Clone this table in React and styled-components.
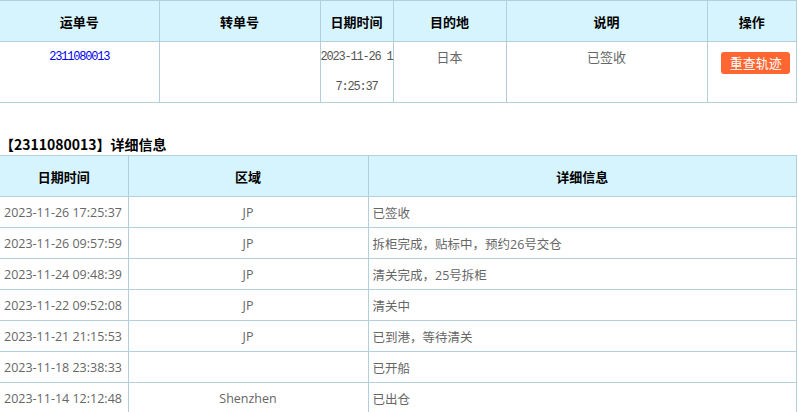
import React from 'react';
import styled, { createGlobalStyle } from 'styled-components';

const GlobalStyle = createGlobalStyle`
  body {
    margin: 0;
    background: #fff;
    font-family: "Open Sans", "Noto Sans CJK SC", sans-serif;
  }
`;

const Page = styled.div`
  width: 797px;
`;

const Table = styled.table`
  width: 797px;
  border-collapse: collapse;
  table-layout: fixed;

  th:first-child,
  td:first-child {
    border-left: none;
  }
`;

const HeadCell = styled.th`
  height: 40px;
  padding: 0;
  background: #d6f4fd;
  border: 1px solid #b3cfdc;
  color: #000;
  font-size: 13px;
  font-weight: bold;
  text-align: center;
  font-family: "Noto Sans CJK SC", sans-serif;
`;

const SummaryCell = styled.td`
  height: 60px;
  padding: 0 0 0 ${p => (p.$indent ? '8px' : '0')};
  border: 1px solid #b3cfdc;
  vertical-align: top;
  text-align: center;
  line-height: 30px;
  font-size: 13px;
  color: #666;
  font-family: "Noto Sans CJK SC", sans-serif;
`;

const MonoText = styled.div`
  font-family: "Liberation Mono", monospace;
  font-size: 12px;
  line-height: 30px;
  letter-spacing: -1.2px;
  word-break: break-all;
  color: ${p => (p.$link ? '#0000f0' : '#555')};
`;

const RetryButton = styled.button`
  display: block;
  margin: 10px auto 0;
  width: 69px;
  height: 22px;
  padding: 0;
  border: none;
  border-radius: 3px;
  background: #ff6632;
  color: #fff;
  font-size: 13px;
  line-height: 22px;
  font-family: "Noto Sans CJK SC", sans-serif;
`;

const SectionTitle = styled.div`
  height: 52px;
  display: flex;
  align-items: flex-end;
  line-height: 22px;
  font-size: 14px;
  font-weight: bold;
  color: #000;
  font-family: "Noto Sans CJK SC", sans-serif;
`;

const Cell = styled.td`
  height: 30px;
  padding: 0 4px;
  border: 1px solid #b3cfdc;
  text-align: ${p => p.$align || 'left'};
  font-size: 12.5px;
  color: #666;
  white-space: nowrap;
`;

const trackRows = [
  ['2023-11-26 17:25:37', 'JP', '已签收'],
  ['2023-11-26 09:57:59', 'JP', '拆柜完成，贴标中，预约26号交仓'],
  ['2023-11-24 09:48:39', 'JP', '清关完成，25号拆柜'],
  ['2023-11-22 09:52:08', 'JP', '清关中'],
  ['2023-11-21 21:15:53', 'JP', '已到港，等待清关'],
  ['2023-11-18 23:38:33', '', '已开船'],
  ['2023-11-14 12:12:48', 'Shenzhen', '已出仓']
];

const App = () => {
  return (
    <Page>
      <GlobalStyle />
      <Table>
        <colgroup>
          <col style={{ width: '159px' }} />
          <col style={{ width: '161px' }} />
          <col style={{ width: '73px' }} />
          <col style={{ width: '113px' }} />
          <col style={{ width: '201px' }} />
          <col />
        </colgroup>
        <thead>
          <tr>
            <HeadCell>运单号</HeadCell>
            <HeadCell>转单号</HeadCell>
            <HeadCell>日期时间</HeadCell>
            <HeadCell>目的地</HeadCell>
            <HeadCell>说明</HeadCell>
            <HeadCell>操作</HeadCell>
          </tr>
        </thead>
        <tbody>
          <tr>
            <SummaryCell>
              <MonoText $link>2311080013</MonoText>
            </SummaryCell>
            <SummaryCell />
            <SummaryCell>
              <MonoText>2023-11-26 17:25:37</MonoText>
            </SummaryCell>
            <SummaryCell>日本</SummaryCell>
            <SummaryCell>已签收</SummaryCell>
            <SummaryCell $indent>
              <RetryButton>重查轨迹</RetryButton>
            </SummaryCell>
          </tr>
        </tbody>
      </Table>
      <SectionTitle>【2311080013】详细信息</SectionTitle>
      <Table>
        <colgroup>
          <col style={{ width: '128px' }} />
          <col style={{ width: '240px' }} />
          <col />
        </colgroup>
        <thead>
          <tr>
            <HeadCell>日期时间</HeadCell>
            <HeadCell>区域</HeadCell>
            <HeadCell>详细信息</HeadCell>
          </tr>
        </thead>
        <tbody>
          {trackRows.map(([time, area, info]) => (
            <tr key={time}>
              <Cell>{time}</Cell>
              <Cell $align='center'>{area}</Cell>
              <Cell>{info}</Cell>
            </tr>
          ))}
        </tbody>
      </Table>
    </Page>
  );
};

export default App;
